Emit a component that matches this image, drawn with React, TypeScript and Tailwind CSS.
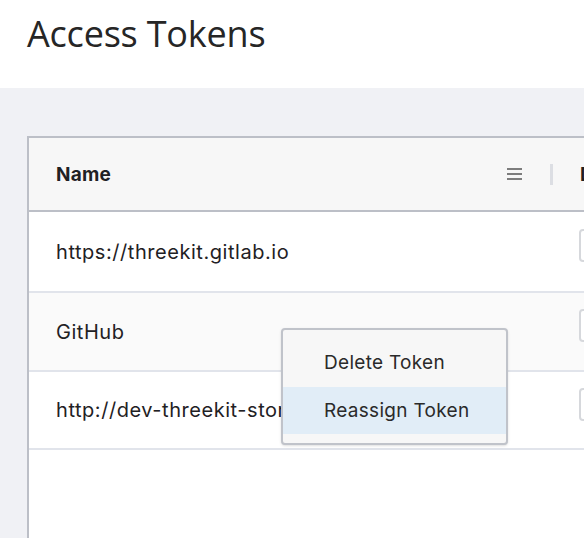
const rows = [
  { name: 'https://threekit.gitlab.io', h: 'h-[81px]', bg: 'bg-white' },
  { name: 'GitHub', h: 'h-[79px]', bg: 'bg-[#fafafa]' },
  { name: 'http://dev-threekit-store.herokuapp.com', h: 'h-[78px]', bg: 'bg-white' },
];

function ColumnMenuIcon() {
  return (
    <svg width="15" height="12" viewBox="0 0 15 12" className="text-[#555]">
      <path d="M0 1h15M0 6h15M0 11h15" stroke="currentColor" strokeWidth="1.6" />
    </svg>
  );
}

export default function App() {
  return (
    <div className="w-[584px] h-[538px] overflow-hidden bg-[#f0f1f5] font-['Inter',sans-serif] text-[#1f2124]">
      {/* Page header */}
      <header className="h-[88px] bg-white pl-[27px] pt-[12px]">
        <h1 className="font-['Open_Sans',sans-serif] text-[36px] leading-[44px] tracking-[-0.2px] text-[#262626] whitespace-nowrap">
          Access Tokens
        </h1>
      </header>

      <div className="pl-[27px] pt-[48px]">
        <div className="relative w-[720px] h-[420px] bg-white border-l-2 border-t-2 border-[#bcbfc7]">
          {/* Column headers */}
          <div className="flex h-[74px] items-center bg-[#f7f7f7] border-b-2 border-[#bcbfc7]">
            <div className="flex w-[521px] items-center pl-[27px] pr-[28px]">
              <span className="flex-1 pt-[2px] text-[19px] font-bold tracking-[0.2px]">Name</span>
              <ColumnMenuIcon />
            </div>
            <span className="h-[21px] w-[3px] bg-[#dcdee3]" />
            <span className="pl-[27px] pt-[2px] text-[19px] font-bold tracking-[0.2px]">Date</span>
          </div>

          {/* Rows */}
          {rows.map((r) => (
            <div key={r.name} className={`flex ${r.h} ${r.bg} items-center border-b-2 border-[#e1e4eb]`}>
              <div className="w-[550px] pl-[27px] text-[20px] tracking-[0.55px] whitespace-nowrap overflow-hidden">{r.name}</div>
              <div className="-mt-[12px] h-[33px] w-[90px] rounded-[4px] border-2 border-[#d6d8dc] bg-white" />
            </div>
          ))}

          {/* Context menu */}
          <div className="absolute left-[252px] top-[190px] w-[227px] rounded-[4px] border-2 border-[#c0c3ca] bg-[#f7f7f7] pt-[8px] pb-[9px] shadow-sm">
            <div className="flex h-[49px] items-center pl-[41px] pt-[2px] text-[19px] tracking-[0.3px] text-[#2a2a2a]">
              Delete Token
            </div>
            <div className="flex h-[47px] items-center bg-[#e1edf7] pl-[41px] pt-[2px] text-[19px] tracking-[0.3px] text-[#2a2a2a]">
              Reassign Token
            </div>
          </div>
        </div>
      </div>
    </div>
  );
}
